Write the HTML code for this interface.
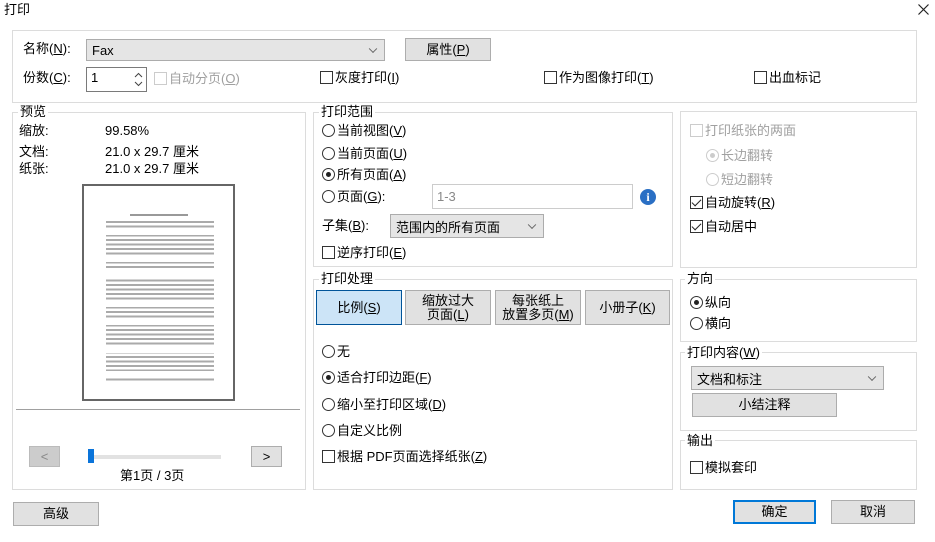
<!DOCTYPE html>
<html><head><meta charset="utf-8"><style>
*{box-sizing:border-box;margin:0;padding:0}
body{width:935px;height:542px;background:#fff;font-family:"Liberation Sans","Noto Sans CJK SC",sans-serif;font-size:13px;color:#000;position:relative;overflow:hidden}
.a{position:absolute;white-space:nowrap;line-height:16px}
.g{position:absolute;border:1px solid #dcdcdc}
.lg{position:absolute;background:#fff;padding:0 2px;line-height:16px}
.btn{position:absolute;background:#e1e1e1;border:1px solid #adadad;text-align:center;line-height:14px;display:flex;align-items:center;justify-content:center}
.dd{position:absolute;background:#e5e5e5;border:1px solid #acacac;padding-left:5px;display:flex;align-items:center}
.dd:after{content:"";position:absolute;right:8px;top:50%;width:5px;height:5px;border-right:1px solid #666;border-bottom:1px solid #666;transform:translateY(-70%) rotate(45deg)}
.cb{display:inline-block;width:13px;height:13px;border:1px solid #333;vertical-align:-2px;margin-right:2px;background:#fff;position:relative}
.cb.dis{border-color:#ccc}
.cb.on:after{content:"";position:absolute;left:3px;top:0px;width:4px;height:8px;border-right:1px solid #222;border-bottom:1px solid #222;transform:rotate(45deg)}
.rb{display:inline-block;width:13px;height:13px;border:1px solid #333;border-radius:50%;vertical-align:-2px;margin-right:2px;background:#fff;position:relative}
.rb.on:after{content:"";position:absolute;left:3px;top:3px;width:5px;height:5px;border-radius:50%;background:#222}
.rb.dis{border-color:#ccc}.rb.dis.on:after{background:#ccc}
.dis-t{color:#a0a0a0}
u{text-decoration:underline}
</style></head><body>
<div class="a" style="left:4px;top:2px">打印</div>
<svg style="position:absolute;left:918px;top:4px" width="11" height="11"><path d="M0.5 0.5L10.5 10.5M10.5 0.5L0.5 10.5" stroke="#222" stroke-width="1.2"/></svg>

<div class="g" style="left:12px;top:30px;width:905px;height:73px"></div>
<div class="a" style="left:23px;top:41px">名称(<u>N</u>):</div>
<div class="dd" style="left:86px;top:39px;width:299px;height:22px">Fax</div>
<div class="btn" style="left:405px;top:38px;width:86px;height:23px">属性(<u>P</u>)</div>
<div class="a" style="left:23px;top:70px">份数(<u>C</u>):</div>
<div style="position:absolute;left:86px;top:67px;width:61px;height:25px;border:1px solid #7a7a7a;padding:2px 4px">1
<svg style="position:absolute;right:3px;top:3px" width="9" height="17"><path d="M1 6L4.5 2.5L8 6M1 11L4.5 14.5L8 11" stroke="#444" fill="none"/></svg></div>
<div class="a dis-t" style="left:154px;top:71px"><span class="cb dis"></span>自动分页(<u>O</u>)</div>
<div class="a" style="left:320px;top:70px"><span class="cb"></span>灰度打印(<u>I</u>)</div>
<div class="a" style="left:544px;top:70px"><span class="cb"></span>作为图像打印(<u>T</u>)</div>
<div class="a" style="left:754px;top:70px"><span class="cb"></span>出血标记</div>

<!-- preview -->
<div class="g" style="left:12px;top:112px;width:294px;height:378px"></div>
<div class="lg" style="left:18px;top:104px">预览</div>
<div class="a" style="left:19px;top:123px">缩放:</div><div class="a" style="left:105px;top:123px">99.58%</div>
<div class="a" style="left:19px;top:144px">文档:</div><div class="a" style="left:105px;top:144px">21.0 x 29.7 厘米</div>
<div class="a" style="left:19px;top:161px">纸张:</div><div class="a" style="left:105px;top:161px">21.0 x 29.7 厘米</div>
<div style="position:absolute;left:82px;top:184px;width:153px;height:217px;border:2px solid #666;background:#fff">
<div style="position:absolute;left:46px;top:28px;width:58px;height:2px;background:#999"></div>
<div style="position:absolute;left:22px;top:35px;width:108px;height:160px;background:repeating-linear-gradient(#aaa 0 2px,transparent 2px 4.5px);-webkit-mask:linear-gradient(#000 0 9px,transparent 9px 14px,#000 14px 36px,transparent 36px 41px,#000 41px 48px,transparent 48px 58px,#000 58px 80px,transparent 80px 86px,#000 86px 98px,transparent 98px 104px,#000 104px 126px,transparent 126px 132px,#000 132px 150px,transparent 150px 156px,#000 156px 162px)"></div>
</div>
<div style="position:absolute;left:16px;top:409px;width:284px;height:1px;background:#a0a0a0"></div>
<div class="btn" style="left:29px;top:446px;width:31px;height:21px;background:#ccc;border-color:#bbb;color:#888">&lt;</div>
<div style="position:absolute;left:88px;top:455px;width:133px;height:4px;background:#e2e2e2"></div>
<div style="position:absolute;left:88px;top:449px;width:6px;height:14px;background:#0a74da"></div>
<div class="btn" style="left:251px;top:446px;width:31px;height:21px">&gt;</div>
<div class="a" style="left:120px;top:468px">第1页 / 3页</div>

<!-- print range -->
<div class="g" style="left:313px;top:112px;width:360px;height:155px"></div>
<div class="lg" style="left:319px;top:104px">打印范围</div>
<div class="a" style="left:322px;top:123px"><span class="rb"></span>当前视图(<u>V</u>)</div>
<div class="a" style="left:322px;top:146px"><span class="rb"></span>当前页面(<u>U</u>)</div>
<div class="a" style="left:322px;top:167px"><span class="rb on"></span>所有页面(<u>A</u>)</div>
<div class="a" style="left:322px;top:189px"><span class="rb"></span>页面(<u>G</u>):</div>
<div style="position:absolute;left:432px;top:184px;width:201px;height:25px;border:1px solid #ccc;color:#888;padding:4px 4px;line-height:16px">1-3</div>
<div style="position:absolute;left:640px;top:189px;width:16px;height:16px;border-radius:50%;background:#2a6fc4;color:#fff;font:bold 12px 'Liberation Serif',serif;text-align:center;line-height:16px">i</div>
<div class="a" style="left:322px;top:218px">子集(<u>B</u>):</div>
<div class="dd" style="left:390px;top:214px;width:154px;height:24px">范围内的所有页面</div>
<div class="a" style="left:322px;top:245px"><span class="cb"></span>逆序打印(<u>E</u>)</div>

<!-- processing -->
<div class="g" style="left:313px;top:279px;width:360px;height:211px"></div>
<div class="lg" style="left:319px;top:271px">打印处理</div>
<div class="btn" style="left:316px;top:290px;width:86px;height:35px;background:#cce4f7;border-color:#005499">比例(<u>S</u>)</div>
<div class="btn" style="left:405px;top:290px;width:86px;height:35px"><span>缩放过大<br>页面(<u>L</u>)</span></div>
<div class="btn" style="left:495px;top:290px;width:86px;height:35px"><span>每张纸上<br>放置多页(<u>M</u>)</span></div>
<div class="btn" style="left:585px;top:290px;width:85px;height:35px">小册子(<u>K</u>)</div>
<div class="a" style="left:322px;top:344px"><span class="rb"></span>无</div>
<div class="a" style="left:322px;top:370px"><span class="rb on"></span>适合打印边距(<u>F</u>)</div>
<div class="a" style="left:322px;top:397px"><span class="rb"></span>缩小至打印区域(<u>D</u>)</div>
<div class="a" style="left:322px;top:423px"><span class="rb"></span>自定义比例</div>
<div class="a" style="left:322px;top:449px"><span class="cb"></span>根据 PDF页面选择纸张(<u>Z</u>)</div>

<!-- right -->
<div class="g" style="left:680px;top:111px;width:237px;height:157px"></div>
<div class="a dis-t" style="left:690px;top:123px"><span class="cb dis"></span>打印纸张的两面</div>
<div class="a dis-t" style="left:706px;top:148px"><span class="rb dis on"></span>长边翻转</div>
<div class="a dis-t" style="left:706px;top:172px"><span class="rb dis"></span>短边翻转</div>
<div class="a" style="left:690px;top:195px"><span class="cb on"></span>自动旋转(<u>R</u>)</div>
<div class="a" style="left:690px;top:219px"><span class="cb on"></span>自动居中</div>

<div class="g" style="left:680px;top:279px;width:237px;height:63px"></div>
<div class="lg" style="left:685px;top:271px">方向</div>
<div class="a" style="left:690px;top:295px"><span class="rb on"></span>纵向</div>
<div class="a" style="left:690px;top:316px"><span class="rb"></span>横向</div>

<div class="g" style="left:680px;top:352px;width:237px;height:79px"></div>
<div class="lg" style="left:685px;top:345px">打印内容(<u>W</u>)</div>
<div class="dd" style="left:691px;top:366px;width:193px;height:24px">文档和标注</div>
<div class="btn" style="left:692px;top:393px;width:145px;height:24px">小结注释</div>

<div class="g" style="left:680px;top:440px;width:237px;height:50px"></div>
<div class="lg" style="left:685px;top:433px">输出</div>
<div class="a" style="left:690px;top:460px"><span class="cb"></span>模拟套印</div>

<div class="btn" style="left:13px;top:502px;width:86px;height:24px">高级</div>
<div class="btn" style="left:733px;top:500px;width:83px;height:24px;border:2px solid #0078d7">确定</div>
<div class="btn" style="left:831px;top:500px;width:84px;height:24px">取消</div>
</body></html>
